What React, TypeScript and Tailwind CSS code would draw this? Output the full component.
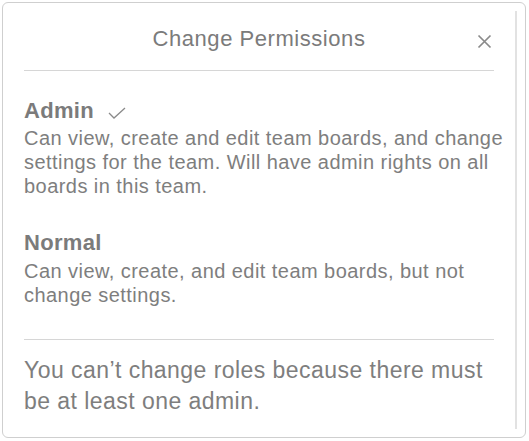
import React from 'react';

const font = { fontFamily: '"Liberation Sans", Arial, Helvetica, sans-serif' };

export default function App() {
  return (
    <div className="w-[529px] h-[441px] bg-white p-[2px]" style={font}>
      <div className="w-[524px] h-[436px] border border-[#cfcfcf] rounded-[6px] flex bg-white">
        <div className="flex-1 pl-[21px] pr-[4px] text-[#7e7e7e]">
          {/* header */}
          <div className="relative h-[68px] mr-[17px] flex justify-center pt-[22px] border-b border-[#d6d6d6]">
            <h3 className="text-[22px] leading-[28px] tracking-[0.55px] text-[#7b7b7b]">Change Permissions</h3>
            <button className="absolute right-[2px] top-[31px]">
              <svg width="15" height="15" viewBox="0 0 15 15">
                <path d="M1.5 1.5 L13.5 13.5 M13.5 1.5 L1.5 13.5" stroke="#8a8a8a" strokeWidth="1.7" fill="none" />
              </svg>
            </button>
          </div>

          {/* roles */}
          <div className="mt-[26px] flex items-center gap-[14px]">
            <span className="text-[22px] leading-[28px] tracking-[0.3px] font-bold text-[#7b7b7b]">Admin</span>
            <svg width="18" height="12" viewBox="0 0 18 12" className="mt-[3px]">
              <path d="M1 6 L6 11 L17 1" fill="none" stroke="#8a8a8a" strokeWidth="1.3" />
            </svg>
          </div>
          <p className="mt-[1px] text-[20px] leading-[24px] tracking-[0.45px]">
            Can view, create and edit team boards, and change settings for the team. Will have admin rights on all boards in this team.
          </p>

          <div className="mt-[31px] text-[22px] leading-[28px] tracking-[0.3px] font-bold text-[#7b7b7b]">Normal</div>
          <p className="mt-[2px] text-[20px] leading-[24px] tracking-[0.45px]">
            Can view, create, and edit team boards, but not change settings.
          </p>

          {/* footer */}
          <div className="mt-[32px] mr-[17px] border-t border-[#d6d6d6]" />
          <p className="pt-[15px] text-[23px] leading-[31px] tracking-[0.45px]">
            You can’t change roles because there must be at least one admin.
          </p>
        </div>
        <div className="w-[2px] bg-[#e2e2e2] my-[8px] mr-[8px]" />
      </div>
    </div>
  );
}
